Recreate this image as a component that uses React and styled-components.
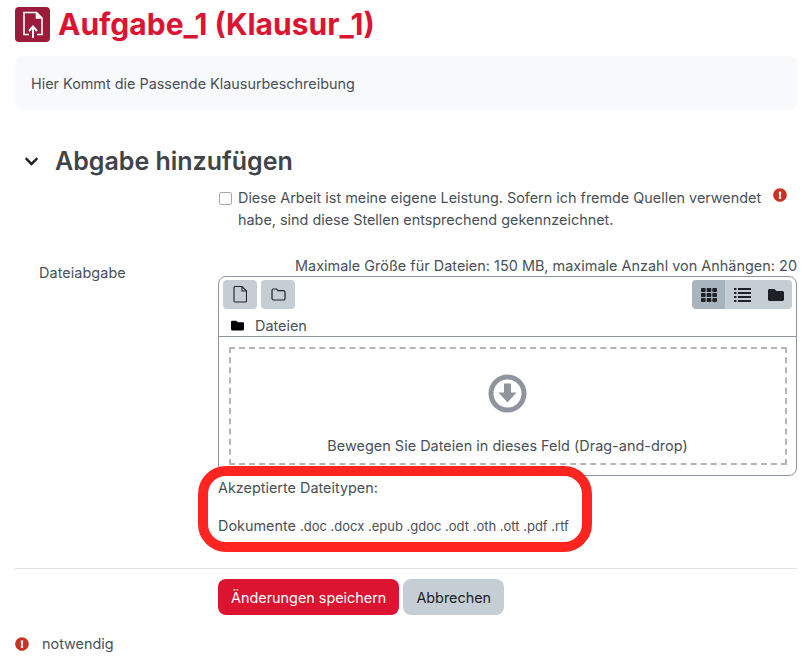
import React from 'react';
import styled, { createGlobalStyle } from 'styled-components';
import { FaChevronDown, FaExclamationCircle, FaTh, FaFolder } from 'react-icons/fa';

const GlobalStyle = createGlobalStyle`
  html, body { margin: 0; padding: 0; background: #fff; }
  body {
    font-family: Inter, "Liberation Sans", sans-serif;
    font-size: 14.4px;
    color: #495057;
    overflow: hidden;
  }
`;

const Page = styled.div`
  width: 812px;
  height: 662px;
  box-sizing: border-box;
  padding: 7px 15px 0 15px;
  overflow: hidden;
`;

const Header = styled.div`
  display: flex;
  align-items: center;
  gap: 8px;
  height: 35px;
`;

const ActivityIcon = styled.div`
  width: 35px;
  height: 35px;
  border-radius: 4px;
  background: #9a1c3a;
  display: flex;
  align-items: center;
  justify-content: center;
`;

const Title = styled.h1`
  margin: 0;
  font-size: 30px;
  font-weight: 700;
  line-height: 35px;
  color: #dc1331;
`;

const Description = styled.div`
  margin-top: 14px;
  height: 54px;
  box-sizing: border-box;
  padding: 0 16px;
  display: flex;
  align-items: center;
  background: #f8f9fa;
  border-radius: 8px;
`;

const SectionHeader = styled.div`
  margin-top: 33px;
  height: 36px;
  display: flex;
  align-items: center;
  gap: 16px;
  padding-left: 9px;
`;

const SectionTitle = styled.h2`
  margin: 0;
  font-size: 25px;
  font-weight: 600;
  color: #3f4449;
`;

const FormRow = styled.div`
  display: grid;
  grid-template-columns: 203px 579px;
  margin-top: ${(p) => p.$top || 0}px;
`;

const RowLabel = styled.div`
  padding: ${(p) => p.$top || 0}px 0 0 24px;
  letter-spacing: 0.08px;
`;

const CheckLine = styled.div`
  display: flex;
  align-items: flex-start;
  line-height: 22px;
`;

const CheckBox = styled.span`
  flex: none;
  width: 11px;
  height: 11px;
  margin: 5px 6px 0 1px;
  border: 1px solid #a9a9ab;
  border-radius: 2px;
  background: #fff;
`;

const CheckText = styled.div`
  width: 530px;
`;

const RequiredMark = styled.span`
  flex: none;
  margin-left: 5px;
  color: #ca3120;
  font-size: 14px;
  line-height: 20px;
`;

const Limits = styled.div`
  text-align: right;
  line-height: 21px;
  letter-spacing: 0.03px;
`;

const FilePicker = styled.div`
  box-sizing: border-box;
  height: 200px;
  border: 1px solid #8f959e;
  border-radius: 8px;
`;

const Toolbar = styled.div`
  display: flex;
  justify-content: space-between;
  padding: 3px 4px 0 4px;
`;

const ButtonGroup = styled.div`
  display: flex;
  gap: ${(p) => (p.$joined ? 0 : 4)}px;
`;

const ToolButton = styled.div`
  width: ${(p) => p.$width || 34}px;
  height: 29px;
  background: ${(p) => (p.$active ? '#a9b5be' : '#c6ced5')};
  border-radius: ${(p) => p.$radius || '4px'};
  display: flex;
  align-items: center;
  justify-content: center;
  color: #1d2125;
  font-size: 16px;
`;

const PathBar = styled.div`
  height: 28px;
  box-sizing: border-box;
  padding: 5px 0 0 12px;
  display: flex;
  align-items: center;
  gap: 11px;
  border-bottom: 1px solid #8f959e;
  svg { color: #000; font-size: 13px; }
`;

const DropZone = styled.div`
  margin: 10px 9px 0 10px;
  height: 118px;
  box-sizing: border-box;
  border: 2px dashed #b5b5b5;
  display: flex;
  flex-direction: column;
  align-items: center;
  padding: 25px 1px 0 0;
`;

const DropText = styled.div`
  margin-top: 22px;
  line-height: 21px;
  letter-spacing: 0.04px;
`;

const Accepted = styled.div`
  position: relative;
  height: 92px;
  padding-top: 1px;
  box-sizing: border-box;
  line-height: 21px;
`;

const AcceptedLine = styled.div`
  margin-top: ${(p) => p.$top || 0}px;
`;

const Extensions = styled.span`
  font-size: 13px;
`;

const Highlight = styled.div`
  position: absolute;
  left: -20px;
  top: -10px;
  width: 394px;
  height: 86px;
  box-sizing: border-box;
  border: 10px solid #fe2420;
  border-radius: 28px;
  pointer-events: none;
`;

const Divider = styled.hr`
  margin: 0;
  border: 0;
  border-top: 1px solid #dee2e6;
`;

const Actions = styled.div`
  display: flex;
  gap: 4px;
  margin-top: 10px;
  padding-left: 203px;
`;

const Button = styled.button`
  height: 36px;
  padding: 0 13px;
  border: 0;
  border-radius: 8px;
  font: inherit;
  background: ${(p) => (p.$primary ? '#dc1331' : '#c6ced5')};
  color: ${(p) => (p.$primary ? '#fff' : '#1d2125')};
`;

const RequiredNote = styled.div`
  display: flex;
  align-items: center;
  gap: 13px;
  margin-top: 18px;
  line-height: 21px;
  svg { color: #ca3120; font-size: 14px; }
`;

const UploadGlyph = () => (
  <svg width="24" height="28" viewBox="0 0 24 28" fill="none" stroke="#fff" strokeWidth="1.6">
    <path d="M8 23.500H3V1.500h12.500l5.500 5.500v16.500h-5" />
    <path d="M15.500 1.500v5.500h5.500" fill="#fff" />
    <path d="M12 27v-11" strokeWidth="2" />
    <path d="M8 20l4-4.500 4 4.500" strokeWidth="2" />
  </svg>
);

const DropGlyph = () => (
  <svg width="39" height="39" viewBox="0 0 39 39">
    <circle cx="19.500" cy="19.500" r="16.500" fill="none" stroke="#8f959e" strokeWidth="5" />
    <path d="M16 9.500h7v9h5.500l-9 10-9-10H16z" fill="#8f959e" />
  </svg>
);

const FileGlyph = () => (
  <svg width="14" height="17" viewBox="0 0 14 17" fill="none" stroke="#1d2125" strokeWidth="1.1">
    <path d="M1 1.500a1 1 0 0 1 1-1h7l4.500 4.500v10a1 1 0 0 1-1 1H2a1 1 0 0 1-1-1z" />
    <path d="M9 .5V5h4.500" />
  </svg>
);

const FolderGlyph = () => (
  <svg width="15" height="13" viewBox="0 0 15 13" fill="none" stroke="#1d2125" strokeWidth="1.2">
    <path d="M1 2.500a1.500 1.500 0 0 1 1.500-1.500h3L7 2.700h5.500A1.500 1.500 0 0 1 14 4.200v6.300a1.500 1.500 0 0 1-1.500 1.500h-10A1.500 1.500 0 0 1 1 10.500z" />
  </svg>
);

const ListGlyph = () => (
  <svg width="17" height="14" viewBox="0 0 17 14" fill="#1d2125">
    <path d="M0 0h2.500v2H0zM0 4h2.500v2H0zM0 8h2.500v2H0zM0 12h2.500v2H0z" />
    <path d="M4 0h13v2H4zM4 4h13v2H4zM4 8h13v2H4zM4 12h13v2H4z" />
  </svg>
);

export default function App() {
  return (
    <Page>
      <GlobalStyle />
      <Header>
        <ActivityIcon><UploadGlyph /></ActivityIcon>
        <Title>Aufgabe_1 (Klausur_1)</Title>
      </Header>
      <Description>Hier Kommt die Passende Klausurbeschreibung</Description>

      <SectionHeader>
        <FaChevronDown size={15} color="#1d2125" />
        <SectionTitle>Abgabe hinzufügen</SectionTitle>
      </SectionHeader>

      <FormRow $top={8}>
        <div />
        <CheckLine>
          <CheckBox />
          <CheckText>
            Diese Arbeit ist meine eigene Leistung. Sofern ich fremde Quellen verwendet habe, sind diese Stellen entsprechend gekennzeichnet.
          </CheckText>
          <RequiredMark><FaExclamationCircle /></RequiredMark>
        </CheckLine>
      </FormRow>

      <FormRow $top={24}>
        <RowLabel $top={9}>Dateiabgabe</RowLabel>
        <div>
          <Limits>Maximale Größe für Dateien: 150 MB, maximale Anzahl von Anhängen: 20</Limits>
          <FilePicker>
            <Toolbar>
              <ButtonGroup>
                <ToolButton><FileGlyph /></ToolButton>
                <ToolButton><FolderGlyph /></ToolButton>
              </ButtonGroup>
              <ButtonGroup $joined>
                <ToolButton $active $width={33} $radius="4px 0 0 4px"><FaTh /></ToolButton>
                <ToolButton $radius="0"><ListGlyph /></ToolButton>
                <ToolButton $width={33} $radius="0 4px 4px 0"><FaFolder /></ToolButton>
              </ButtonGroup>
            </Toolbar>
            <PathBar><FaFolder />Dateien</PathBar>
            <DropZone>
              <DropGlyph />
              <DropText>Bewegen Sie Dateien in dieses Feld (Drag-and-drop)</DropText>
            </DropZone>
          </FilePicker>
          <Accepted>
            <AcceptedLine>Akzeptierte Dateitypen:</AcceptedLine>
            <AcceptedLine $top={17}>Dokumente <Extensions>.doc .docx .epub .gdoc .odt .oth .ott .pdf .rtf</Extensions></AcceptedLine>
            <Highlight />
          </Accepted>
        </div>
      </FormRow>

      <Divider />
      <Actions>
        <Button $primary>Änderungen speichern</Button>
        <Button>Abbrechen</Button>
      </Actions>
      <RequiredNote><FaExclamationCircle />notwendig</RequiredNote>
    </Page>
  );
}
